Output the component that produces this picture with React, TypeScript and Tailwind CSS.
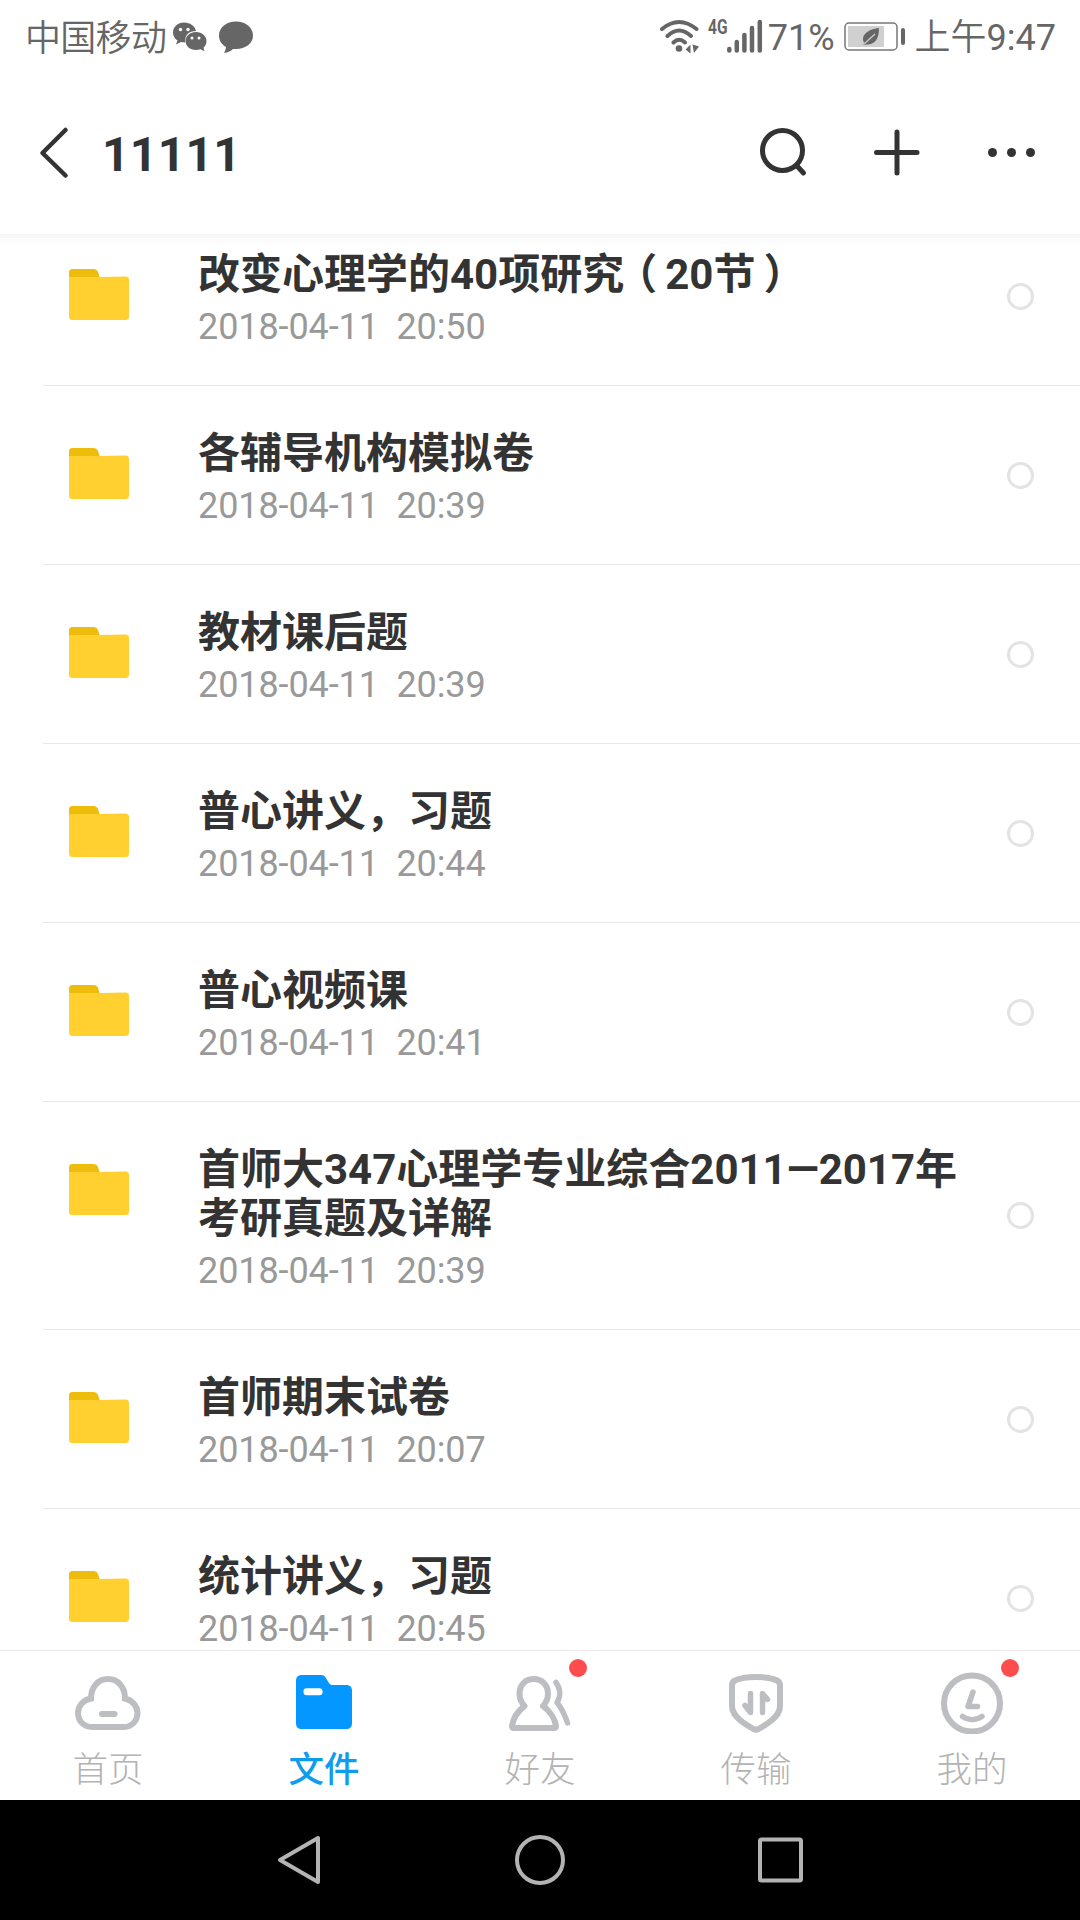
import type { ReactNode } from "react";

// Interface for a folder entry
interface FolderItem {
    name: ReactNode;
    date: string;
    time: string;
}

// Interface for a bottom tab
interface TabItem {
    label: string;
    icon: ReactNode;
    active?: boolean;
    badge?: boolean;
}

const folders: FolderItem[] = [
    {
        // Half-width parentheses, spaced out from the text on both sides
        name: (
            <>
                改变心理学的40项研究
                <span className="ml-[12px] mr-[8px] [font-feature-settings:'halt']">（</span>20节
                <span className="ml-[8px] [font-feature-settings:'halt']">）</span>
            </>
        ),
        date: "2018-04-11",
        time: "20:50",
    },
    { name: "各辅导机构模拟卷", date: "2018-04-11", time: "20:39" },
    { name: "教材课后题", date: "2018-04-11", time: "20:39" },
    { name: "普心讲义，习题", date: "2018-04-11", time: "20:44" },
    { name: "普心视频课", date: "2018-04-11", time: "20:41" },
    {
        name: "首师大347心理学专业综合2011—2017年考研真题及详解",
        date: "2018-04-11",
        time: "20:39",
    },
    { name: "首师期末试卷", date: "2018-04-11", time: "20:07" },
    { name: "统计讲义，习题", date: "2018-04-11", time: "20:45" },
];

// Tab bar icons, all drawn on a 72x64 canvas
const HomeIcon = () => (
    <svg width="72" height="64" viewBox="0 0 72 64" fill="none" stroke="#bdbec2" strokeWidth="6">
        <path d="M19 28.5C19 17 26 9 36 9s17 8 17 19.5C60 30 65.5 36 65.5 43c0 8-6 14-13.5 14H20C12 57 6 51 6 43c0-7 5-13 13-14.500z" />
        <path d="M30 44h12.500" strokeLinecap="round" />
    </svg>
);

const FilesIcon = () => (
    <svg width="72" height="64" viewBox="0 0 72 64">
        <path
            d="M14 5h19c2 0 3.500.7 4.500 2.500l3.500 5.500c.8 1.500 2 2 3.500 2H58c4 0 6 2 6 6v32c0 4-2 6-6 6H14c-4 0-6-2-6-6V11c0-4 2-6 6-6z"
            fill="#0497ff"
        />
        <rect x="15.500" y="18.300" width="19" height="7" rx="3" fill="#fff" />
    </svg>
);

const FriendsIcon = () => (
    <svg
        width="72"
        height="64"
        viewBox="0 0 72 64"
        fill="none"
        stroke="#bdbec2"
        strokeWidth="6"
        strokeLinecap="round"
        strokeLinejoin="round"
    >
        <path d="M29.500 9c-8 0-14 6-14 15 0 5 1.500 8 5 12C14 41 9 49 8 56c0 1.500.5 2 2 2h40c1.500 0 2-.5 2-2-1-7-6-15-13-20 3.500-4 5-7 5-12 0-9-6-15-14.500-15z" />
        <path d="M52 12.500c4.500 6 5 13.500 1 20 5 6 8 13 10.500 20.500" strokeWidth="5.500" />
    </svg>
);

const TransferIcon = () => (
    <svg
        width="72"
        height="64"
        viewBox="0 0 72 64"
        fill="none"
        stroke="#bdbec2"
        strokeWidth="6"
        strokeLinecap="round"
        strokeLinejoin="round"
    >
        <path d="M36 7c9 0 16 1 21 3.500 2 1 3 2.500 3 5V36c0 6-3 9.500-8 14-4 3.500-9 6.500-13.500 9-2 1-3 1-5 0C29 56.500 24 53.500 20 50c-5-4.500-8-8-8-14V15.500c0-2.500 1-4 3-5C20 8 27 7 36 7z" />
        <path d="M30.500 23.500v19l-5.500-7M42.500 42.500v-19l5 6" strokeWidth="5.500" />
    </svg>
);

const MineIcon = () => (
    <svg
        width="72"
        height="64"
        viewBox="0 0 72 64"
        fill="none"
        stroke="#bdbec2"
        strokeWidth="6"
        strokeLinecap="round"
        strokeLinejoin="round"
    >
        <circle cx="36" cy="33.500" r="28" />
        <path d="M37 22l-5 14.500h9.500M26.500 46.500c6 4 13.500 4 19.500 0" strokeWidth="5.500" />
    </svg>
);

const tabs: TabItem[] = [
    { label: "首页", icon: <HomeIcon /> },
    { label: "文件", icon: <FilesIcon />, active: true },
    { label: "好友", icon: <FriendsIcon />, badge: true },
    { label: "传输", icon: <TransferIcon /> },
    { label: "我的", icon: <MineIcon />, badge: true },
];

// Android status bar
const StatusBar = () => (
    <div className="flex h-[73px] items-center justify-between pl-[25px] pr-[24px] text-[36px] font-[350] text-[#666]">
        <div className="flex items-center">
            <span className="pt-[4px] tracking-[-0.7px]">中国移动</span>
            <svg className="ml-1.5" width="36" height="34" viewBox="0 0 36 34" fill="#666">
                <path d="M12 2.500C5.500 2.500 1 7 1 12.500c0 3.500 1.700 6 4.500 8L4 24.500l5-2.500c1.500.3 2.500.4 4 .4C13 14.500 17 11 24 11 23 6 18 2.500 12 2.500z" />
                <path d="M24 12c-6 0-10.500 4-10.500 9s4.500 9 10.500 9c1.500 0 3-.3 4.500-.8l4 2-1-3.500c2-1.700 3-4 3-6.700 0-5-4.500-9-10.500-9z" />
                <g fill="#fff">
                    <circle cx="8.500" cy="9.500" r="1.700" />
                    <circle cx="16" cy="9.500" r="1.700" />
                    <circle cx="20" cy="18" r="1.500" />
                    <circle cx="27" cy="18" r="1.500" />
                </g>
            </svg>
            <svg className="ml-2.5" width="36" height="34" viewBox="0 0 36 34" fill="#666">
                <path d="M18 1.500C8.500 1.500 1 7.500 1 15.500c0 5 2.500 9 7 11.500-.2 2-.8 4-2 6 4-.5 7-2 9-4h3c9.500 0 17-5.500 17-13.500S27.500 1.500 18 1.500z" />
            </svg>
        </div>
        <div className="flex items-center">
            <svg width="44" height="36" viewBox="0 0 44 36" fill="none" stroke="#666">
                <path
                    d="M4 10Q21 -4 38.500 10M9.500 17Q21 6 33 17M15.500 23.500Q21 18 27 23.500"
                    strokeWidth="4"
                    strokeLinecap="round"
                />
                <circle cx="21" cy="29.500" r="3.300" fill="#666" stroke="none" />
                <path d="M27.500 30.500l5-5v9zM34.500 25.500l6.500 2-5 6.500z" fill="#666" stroke="none" />
            </svg>
            <span className="-mr-2 mb-5 ml-[6px] origin-left scale-x-[0.74] text-[21px] font-bold leading-6">4G</span>
            <svg width="37" height="36" viewBox="0 0 37 36" fill="none" stroke="#666">
                <path
                    d="M2.300 30v1.500M9.800 23v8.500M17.400 16v15.500M25 9v22.500M32.800 3v28.500"
                    strokeWidth="4.500"
                    strokeLinecap="round"
                />
            </svg>
            <span className="ml-[4px] pt-[3px] font-normal">71%</span>
            <svg className="ml-[9px]" width="62" height="30" viewBox="0 0 62 30">
                <rect x="1" y="1" width="52" height="27" rx="4" fill="none" stroke="#777" strokeWidth="1.500" />
                <rect x="4" y="4" width="36" height="21" fill="#d0d0d0" />
                <path d="M35 6c-9 1-16 5-16 11 0 2 .5 3 1.500 4l-1.500 2 8-1c6-2 8-8 8-16z" fill="#666" />
                <path d="M19.500 22.500L31 12" stroke="#d0d0d0" strokeWidth="1.200" />
                <rect x="57" y="6" width="4" height="17" rx="2" fill="#666" />
            </svg>
            <span className="ml-[9px] pt-[3px]">
                上午<span className="font-normal">9:47</span>
            </span>
        </div>
    </div>
);

// Title bar with back, search, add and more
const Header = () => (
    <div className="flex h-[161px] items-center bg-white pb-1">
        <svg className="ml-[38px]" width="34" height="54" viewBox="0 0 34 54" fill="none" stroke="#333">
            <path d="M27.500 5L4.500 28l23 22.500" strokeWidth="4.500" strokeLinecap="round" strokeLinejoin="round" />
        </svg>
        <h1 className="ml-[30px] flex-1 pt-[7px] text-[48px] font-bold tracking-[0.3px] text-[#333]">11111</h1>
        <svg
            className="mr-[38px]"
            width="288"
            height="54"
            viewBox="0 0 288 54"
            fill="none"
            stroke="#333"
            strokeWidth="5"
            strokeLinecap="round"
        >
            <circle cx="28.500" cy="25.500" r="20" />
            <path d="M43.500 41.500l6 6.500M122.500 27.500h40.500M143 7v41" />
            <g fill="#333" stroke="none">
                <circle cx="238.500" cy="27.500" r="4.500" />
                <circle cx="257.500" cy="27.500" r="4.500" />
                <circle cx="276.500" cy="27.500" r="4.500" />
            </g>
        </svg>
    </div>
);

const FolderRow = ({ item }: { item: FolderItem }) => (
    <div className="ml-[43px] flex border-b border-[#e9e9e9]">
        <svg className="ml-[26px] mt-[62px] shrink-0" width="60" height="51" viewBox="0 0 60 51">
            <path d="M4 0h20c3 0 4 1 5 3l3 9H0V4c0-3 1-4 4-4z" fill="#eebd0b" />
            <path d="M0 8h30l26-.5c3 0 4 1 4 4V47c0 3-1 4-4 4H4c-3 0-4-1-4-4z" fill="#ffd02f" />
        </svg>
        <div className="ml-[69px] w-[771px] pb-[35px] pt-[43px]">
            <p className="text-[42px] font-bold leading-[49px] text-[#333]">{item.name}</p>
            <p className="mt-[6px] whitespace-pre text-[36px] leading-[45px] tracking-[-0.1px] text-[#999]">
                {item.date}
                {"  "}
                {item.time}
            </p>
        </div>
        <div className="ml-[38px] h-[27px] w-[27px] self-center rounded-full border-[3px] border-[#e3e3e3]"></div>
    </div>
);

const TabBar = () => (
    <div className="flex h-[150px] border-t border-[#e9e9e9] bg-white">
        {tabs.map((tab) => (
            <div key={tab.label} className="flex flex-1 flex-col items-center pt-[19px]">
                <div className="relative">
                    {tab.icon}
                    {tab.badge && (
                        <span className="absolute -top-[11px] left-[65px] h-[18px] w-[18px] rounded-full bg-[#ff4c4c]"></span>
                    )}
                </div>
                <span
                    className={`mt-[11px] text-[35.5px] leading-[50px] ${
                        tab.active ? "font-medium text-[#109cec]" : "font-light text-[#b3b3b3]"
                    }`}
                >
                    {tab.label}
                </span>
            </div>
        ))}
    </div>
);

// Android navigation keys
const NavigationKeys = () => (
    <div className="flex h-[120px] items-center justify-center gap-[190px] bg-black">
        <svg width="48" height="54" viewBox="0 0 48 54" fill="none" stroke="#b3b3b3">
            <path d="M43 5v44L5 27z" strokeWidth="4" strokeLinejoin="round" />
        </svg>
        <svg width="54" height="54" viewBox="0 0 54 54" fill="none" stroke="#b3b3b3">
            <circle cx="27" cy="27" r="23" strokeWidth="4" />
        </svg>
        <svg width="48" height="54" viewBox="0 0 48 54" fill="none" stroke="#b3b3b3">
            <rect x="3" y="6.500" width="41" height="41" rx="1.500" strokeWidth="4" />
        </svg>
    </div>
);

export default function App() {
    return (
        <div className="flex h-[1920px] w-[1080px] flex-col overflow-hidden bg-white font-[Roboto,'Noto_Sans_CJK_SC',sans-serif]">
            <StatusBar />
            <Header />
            {/* The list is scrolled, so its first row starts under the header */}
            <div className="relative min-h-0 flex-1 overflow-hidden">
                <div className="-mt-[27px]">
                    {folders.map((item, index) => (
                        <FolderRow key={index} item={item} />
                    ))}
                </div>
                <div className="absolute inset-x-0 top-0 h-[10px] border-t-4 border-[#f7f7f7] bg-[#fcfcfc]"></div>
            </div>
            <TabBar />
            <NavigationKeys />
        </div>
    );
}
